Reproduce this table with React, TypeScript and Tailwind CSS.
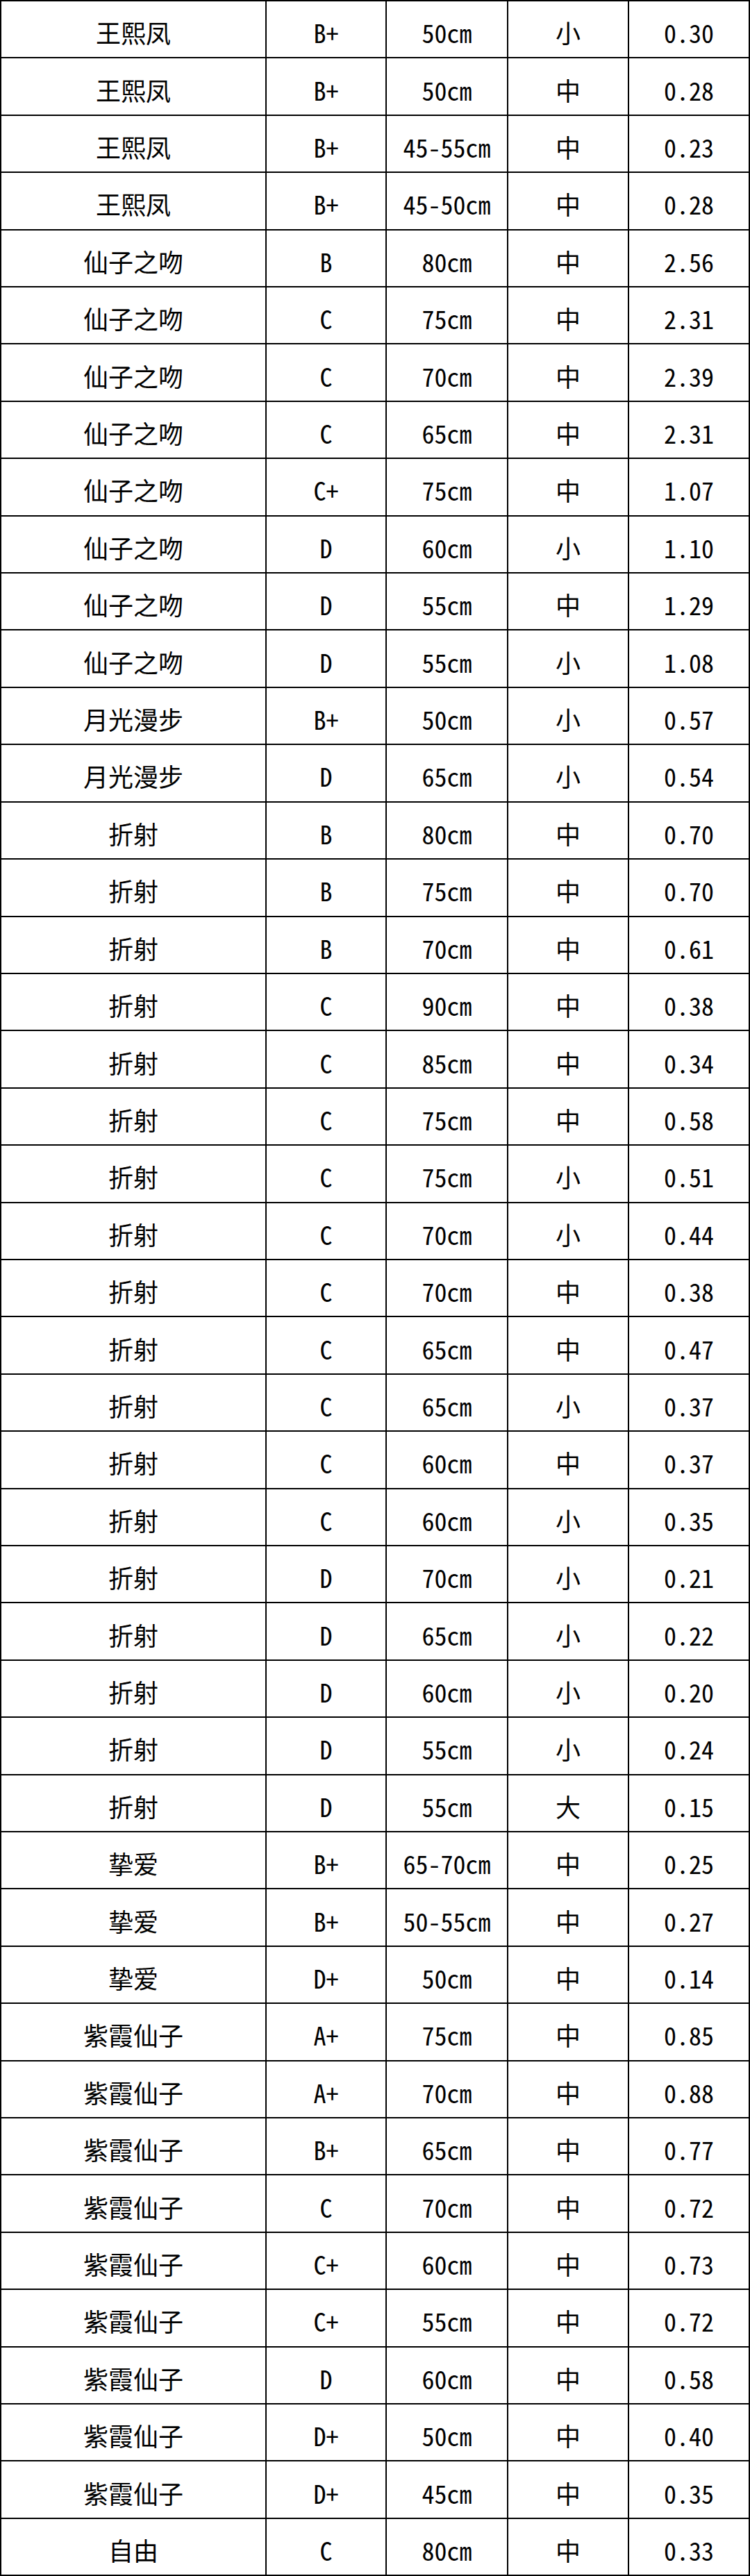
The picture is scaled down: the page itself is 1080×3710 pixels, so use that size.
const rows: [string, string, string, string, string][] = [
  ["王熙凤", "B+", "50cm", "小", "0.30"],
  ["王熙凤", "B+", "50cm", "中", "0.28"],
  ["王熙凤", "B+", "45-55cm", "中", "0.23"],
  ["王熙凤", "B+", "45-50cm", "中", "0.28"],
  ["仙子之吻", "B", "80cm", "中", "2.56"],
  ["仙子之吻", "C", "75cm", "中", "2.31"],
  ["仙子之吻", "C", "70cm", "中", "2.39"],
  ["仙子之吻", "C", "65cm", "中", "2.31"],
  ["仙子之吻", "C+", "75cm", "中", "1.07"],
  ["仙子之吻", "D", "60cm", "小", "1.10"],
  ["仙子之吻", "D", "55cm", "中", "1.29"],
  ["仙子之吻", "D", "55cm", "小", "1.08"],
  ["月光漫步", "B+", "50cm", "小", "0.57"],
  ["月光漫步", "D", "65cm", "小", "0.54"],
  ["折射", "B", "80cm", "中", "0.70"],
  ["折射", "B", "75cm", "中", "0.70"],
  ["折射", "B", "70cm", "中", "0.61"],
  ["折射", "C", "90cm", "中", "0.38"],
  ["折射", "C", "85cm", "中", "0.34"],
  ["折射", "C", "75cm", "中", "0.58"],
  ["折射", "C", "75cm", "小", "0.51"],
  ["折射", "C", "70cm", "小", "0.44"],
  ["折射", "C", "70cm", "中", "0.38"],
  ["折射", "C", "65cm", "中", "0.47"],
  ["折射", "C", "65cm", "小", "0.37"],
  ["折射", "C", "60cm", "中", "0.37"],
  ["折射", "C", "60cm", "小", "0.35"],
  ["折射", "D", "70cm", "小", "0.21"],
  ["折射", "D", "65cm", "小", "0.22"],
  ["折射", "D", "60cm", "小", "0.20"],
  ["折射", "D", "55cm", "小", "0.24"],
  ["折射", "D", "55cm", "大", "0.15"],
  ["挚爱", "B+", "65-70cm", "中", "0.25"],
  ["挚爱", "B+", "50-55cm", "中", "0.27"],
  ["挚爱", "D+", "50cm", "中", "0.14"],
  ["紫霞仙子", "A+", "75cm", "中", "0.85"],
  ["紫霞仙子", "A+", "70cm", "中", "0.88"],
  ["紫霞仙子", "B+", "65cm", "中", "0.77"],
  ["紫霞仙子", "C", "70cm", "中", "0.72"],
  ["紫霞仙子", "C+", "60cm", "中", "0.73"],
  ["紫霞仙子", "C+", "55cm", "中", "0.72"],
  ["紫霞仙子", "D", "60cm", "中", "0.58"],
  ["紫霞仙子", "D+", "50cm", "中", "0.40"],
  ["紫霞仙子", "D+", "45cm", "中", "0.35"],
  ["自由", "C", "80cm", "中", "0.33"],
];

export default function App() {
  return (
    <div className="w-[1080px] h-[3710px] bg-white border-2 border-black flex flex-col text-black text-[36px] leading-none font-['Noto_Sans_Mono_CJK_SC','Noto_Sans_CJK_SC',monospace]">
      {rows.map((r, i) => (
        <div
          key={i}
          className={
            i === rows.length - 1
              ? "flex-1 grid grid-cols-[382px_173px_175px_174px_1fr]"
              : "flex-1 grid grid-cols-[382px_173px_175px_174px_1fr] border-b-2 border-black"
          }
        >
          {r.map((c, j) => (
            <div
              key={j}
              className={
                j === 4
                  ? "flex items-center justify-center pt-2"
                  : "flex items-center justify-center pt-2 border-r-2 border-black"
              }
            >
              {c}
            </div>
          ))}
        </div>
      ))}
    </div>
  );
}
